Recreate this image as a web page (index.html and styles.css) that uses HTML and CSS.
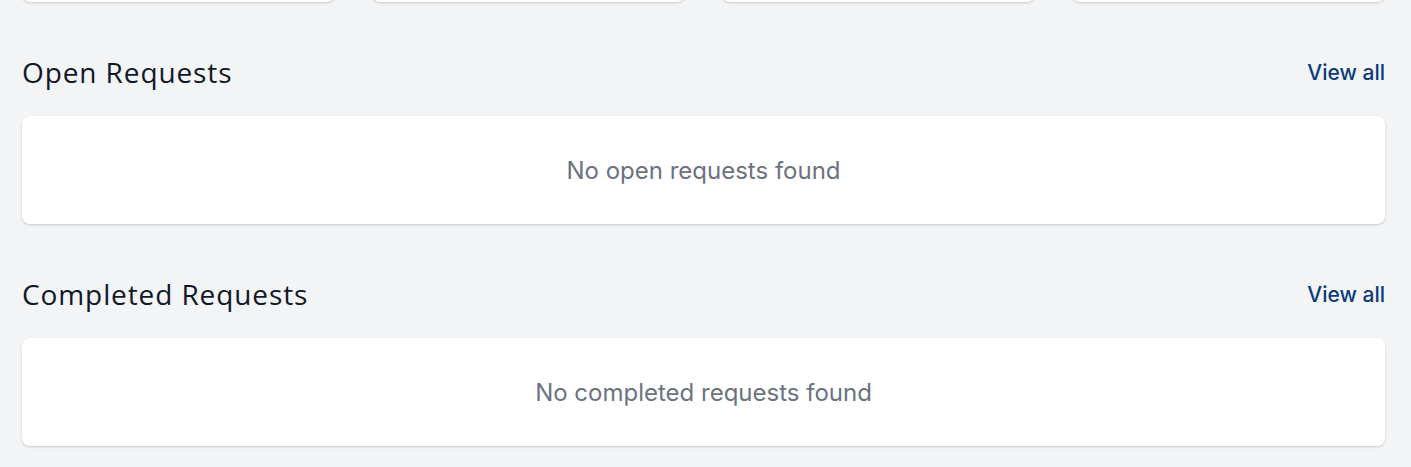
FILE: index.html
```html
<!DOCTYPE html>
<html lang="en">
<head>
<meta charset="utf-8">
<title>Requests</title>
<link rel="stylesheet" href="styles.css">
</head>
<body>
<main class="page">
  <div class="stats">
    <div class="stat-card"></div>
    <div class="stat-card"></div>
    <div class="stat-card"></div>
    <div class="stat-card"></div>
  </div>

  <section class="section">
    <div class="section-head">
      <h2 class="section-title">Open Requests</h2>
      <a class="view-all" href="#">View all</a>
    </div>
    <div class="empty-card">No open requests found</div>
  </section>

  <section class="section">
    <div class="section-head">
      <h2 class="section-title">Completed Requests</h2>
      <a class="view-all" href="#">View all</a>
    </div>
    <div class="empty-card">No completed requests found</div>
  </section>
</main>
</body>
</html>
```

FILE: styles.css
```css
* { box-sizing: border-box; }

html, body {
  margin: 0;
  padding: 0;
  background: #f3f4f6;
  font-family: "Inter", "Liberation Sans", sans-serif;
}

.page {
  padding: 0 26px 0 22px;
  overflow: hidden;
  height: 467px;
}

.stats {
  display: grid;
  grid-template-columns: repeat(4, 1fr);
  gap: 37px;
  margin-top: -100px;
}

.stat-card {
  height: 102px;
  background: #fff;
  border-radius: 8px;
  box-shadow: 0 1px 3px rgba(0, 0, 0, 0.12), 0 1px 2px rgba(0, 0, 0, 0.06);
}

.section {
  margin-top: 54px;
}

.section-head {
  display: flex;
  align-items: center;
  justify-content: space-between;
  height: 32px;
  margin-bottom: 28px;
}

.section-title {
  margin: 0;
  font-family: "Open Sans", "Liberation Sans", sans-serif;
  font-weight: 500;
  font-size: 28px;
  line-height: 32px;
  color: #111827;
  letter-spacing: 0.9px;
}

.view-all {
  font-size: 21px;
  font-weight: 500;
  color: #0c3b77;
  text-decoration: none;
}

.empty-card {
  height: 108px;
  display: flex;
  align-items: center;
  justify-content: center;
  background: #fff;
  border-radius: 8px;
  box-shadow: 0 1px 3px rgba(0, 0, 0, 0.12), 0 1px 2px rgba(0, 0, 0, 0.06);
  font-size: 24px;
  color: #6b7280;
}
```
